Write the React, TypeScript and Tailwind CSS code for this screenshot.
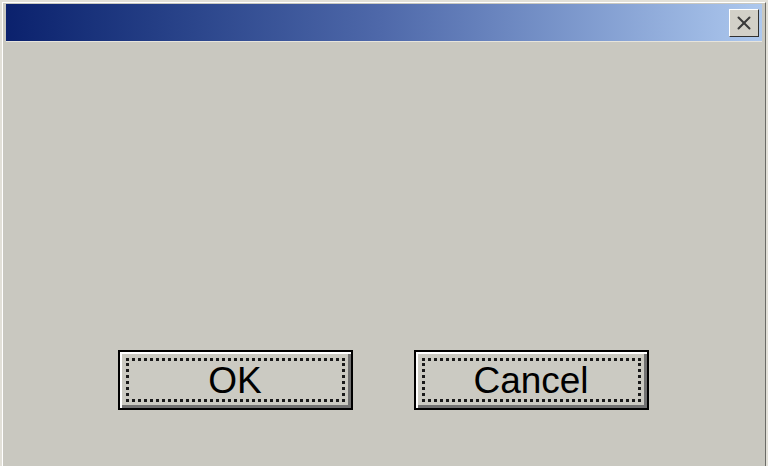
import { X } from "lucide-react";

function DialogButton({ label }: { label: string }) {
  return (
    <button className="h-[60px] w-[235px] border-2 border-black bg-[#cbcac2] p-[6px] shadow-[inset_2px_2px_0_#ffffff,inset_-3px_-3px_0_#717171]">
      <span className="flex h-full w-full items-center justify-center border-[3px] border-dotted border-[#1a1a1a] font-['Liberation_Sans',Arial,sans-serif] text-[37px] leading-none text-black">
        {label}
      </span>
    </button>
  );
}

export default function App() {
  return (
    <div className="h-[466px] w-[768px] overflow-hidden border-l-2 border-t-2 border-r-2 border-[#e2e0d8] bg-[#c9c8c0]">
      <div className="flex h-full flex-col border-l border-t border-r border-white border-r-[#6b6b66] px-[3px] pt-[1px]">
        {/* Title bar */}
        <div className="flex h-[37px] items-center justify-end bg-gradient-to-r from-[#0b216d] via-[#4f69aa] to-[#adc8ee] pr-[3px]">
          <div className="flex h-[28px] w-[30px] items-center justify-center border border-t-white border-l-white border-r-[#303030] border-b-[#303030] bg-[#d2d0c8]">
            <X className="h-[22px] w-[22px] text-[#3a3a3a]" strokeWidth={2.2} />
          </div>
        </div>
        <div className="h-px bg-[#e6e4dc]" />

        {/* Body */}
        <div className="flex flex-1 flex-col justify-end pb-[56px]">
          <div className="flex justify-center gap-[61px] pr-[2px]">
            <DialogButton label="OK" />
            <DialogButton label="Cancel" />
          </div>
        </div>
      </div>
    </div>
  );
}
